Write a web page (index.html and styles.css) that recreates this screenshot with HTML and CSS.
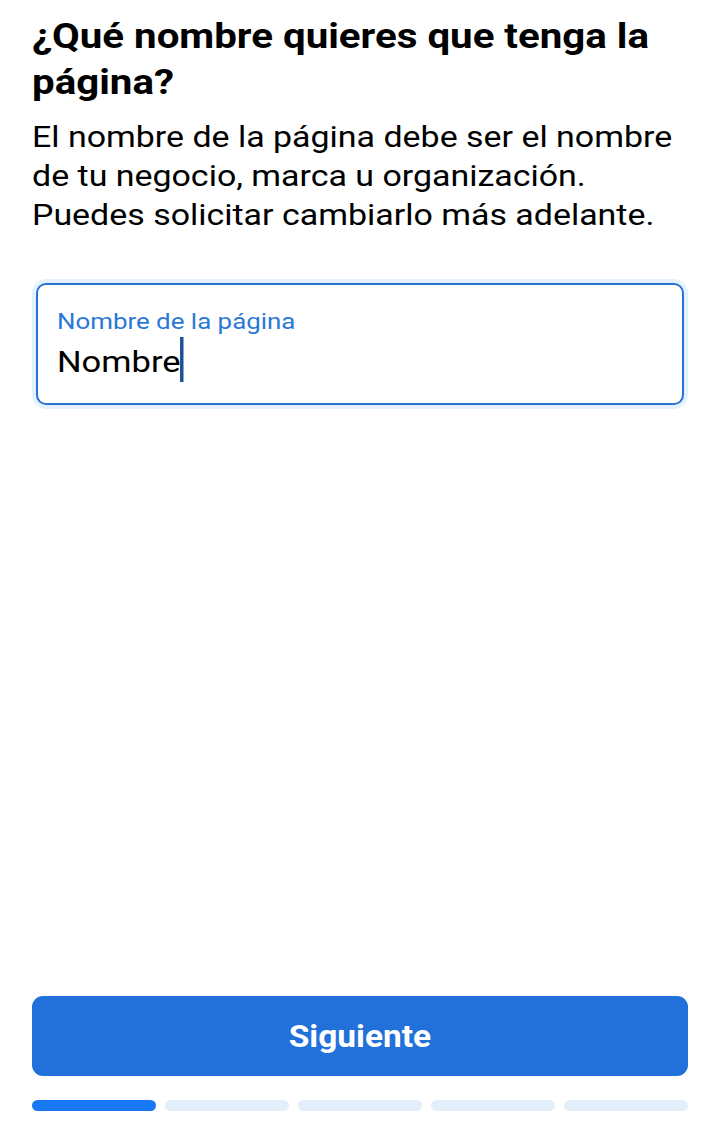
FILE: index.html
```html
<!DOCTYPE html>
<html lang="es">
<head>
<meta charset="utf-8">
<link rel="stylesheet" href="styles.css">
</head>
<body>
<div class="screen">
  <main class="content">
    <h1 class="title"><span class="sx-block">¿Qué nombre quieres que tenga la página?</span></h1>
    <p class="desc"><span class="sx-block">El nombre de la página debe ser el nombre de tu negocio, marca u organización. Puedes solicitar cambiarlo más adelante.</span></p>
    <div class="field">
      <div class="field-box">
        <span class="field-label"><span class="sx">Nombre de la página</span></span>
        <span class="field-value"><span class="sx">Nombre<span class="caret"></span></span></span>
      </div>
    </div>
  </main>
  <footer class="footer">
    <button class="btn"><span class="sx sx-btn">Siguiente</span></button>
    <div class="progress">
      <span class="seg active"></span>
      <span class="seg"></span>
      <span class="seg"></span>
      <span class="seg"></span>
      <span class="seg"></span>
    </div>
  </footer>
</div>
</body>
</html>
```
FILE: styles.css
```css
* { box-sizing: border-box; }
html, body { margin: 0; padding: 0; background: #fff; }
body { font-family: Roboto, "Liberation Sans", sans-serif; color: #000; }
.screen {
  width: 720px;
  height: 1136px;
  display: flex;
  flex-direction: column;
  padding: 0 32px 25px 32px;
}
.content { flex: 1; }

/* the reference glyphs are horizontally wider than plain Roboto */
.sx-block {
  display: block;
  width: 570px;
  transform: scaleX(1.15);
  transform-origin: left top;
}
.sx {
  display: inline-block;
  transform: scaleX(1.15);
  transform-origin: left center;
}
.sx-btn {
  transform: scaleX(1.08);
  transform-origin: center center;
}

.title {
  margin: 0;
  padding-top: 14px;
  font-size: 35px;
  line-height: 46px;
  font-weight: 700;
}
.desc {
  margin: 12px 0 0 0;
  font-size: 29.5px;
  line-height: 39.2px;
  font-weight: 400;
}
.field {
  margin-top: 43px;
  padding: 4px;
  border-radius: 14px;
  background: #e5f1fc;
}
.field-box {
  background: #fff;
  border: 2px solid #2a74d0;
  border-radius: 10px;
  height: 122px;
  padding: 23px 19px 0 19px;
  display: flex;
  flex-direction: column;
}
.field-label {
  display: block;
  font-size: 22.5px;
  line-height: 26px;
  color: #2a78d6;
}
.field-value {
  display: block;
  margin-top: 8px;
  font-size: 30px;
  line-height: 40px;
}
.caret {
  display: inline-block;
  width: 3px;
  height: 45px;
  margin-top: -5px;
  vertical-align: -10px;
  background: #1c4f96;
}
.footer { display: flex; flex-direction: column; }
.btn {
  height: 80px;
  border: none;
  border-radius: 11px;
  background: #2270da;
  color: #fff;
  font-family: Roboto, "Liberation Sans", sans-serif;
  font-size: 31px;
  font-weight: 700;
  padding: 0;
  display: flex;
  align-items: center;
  justify-content: center;
}
.progress {
  margin-top: 24px;
  display: flex;
  gap: 9px;
}
.seg {
  flex: 1;
  height: 11px;
  border-radius: 6px;
  background: #e4effc;
}
.seg.active { background: #1877f2; }
```
